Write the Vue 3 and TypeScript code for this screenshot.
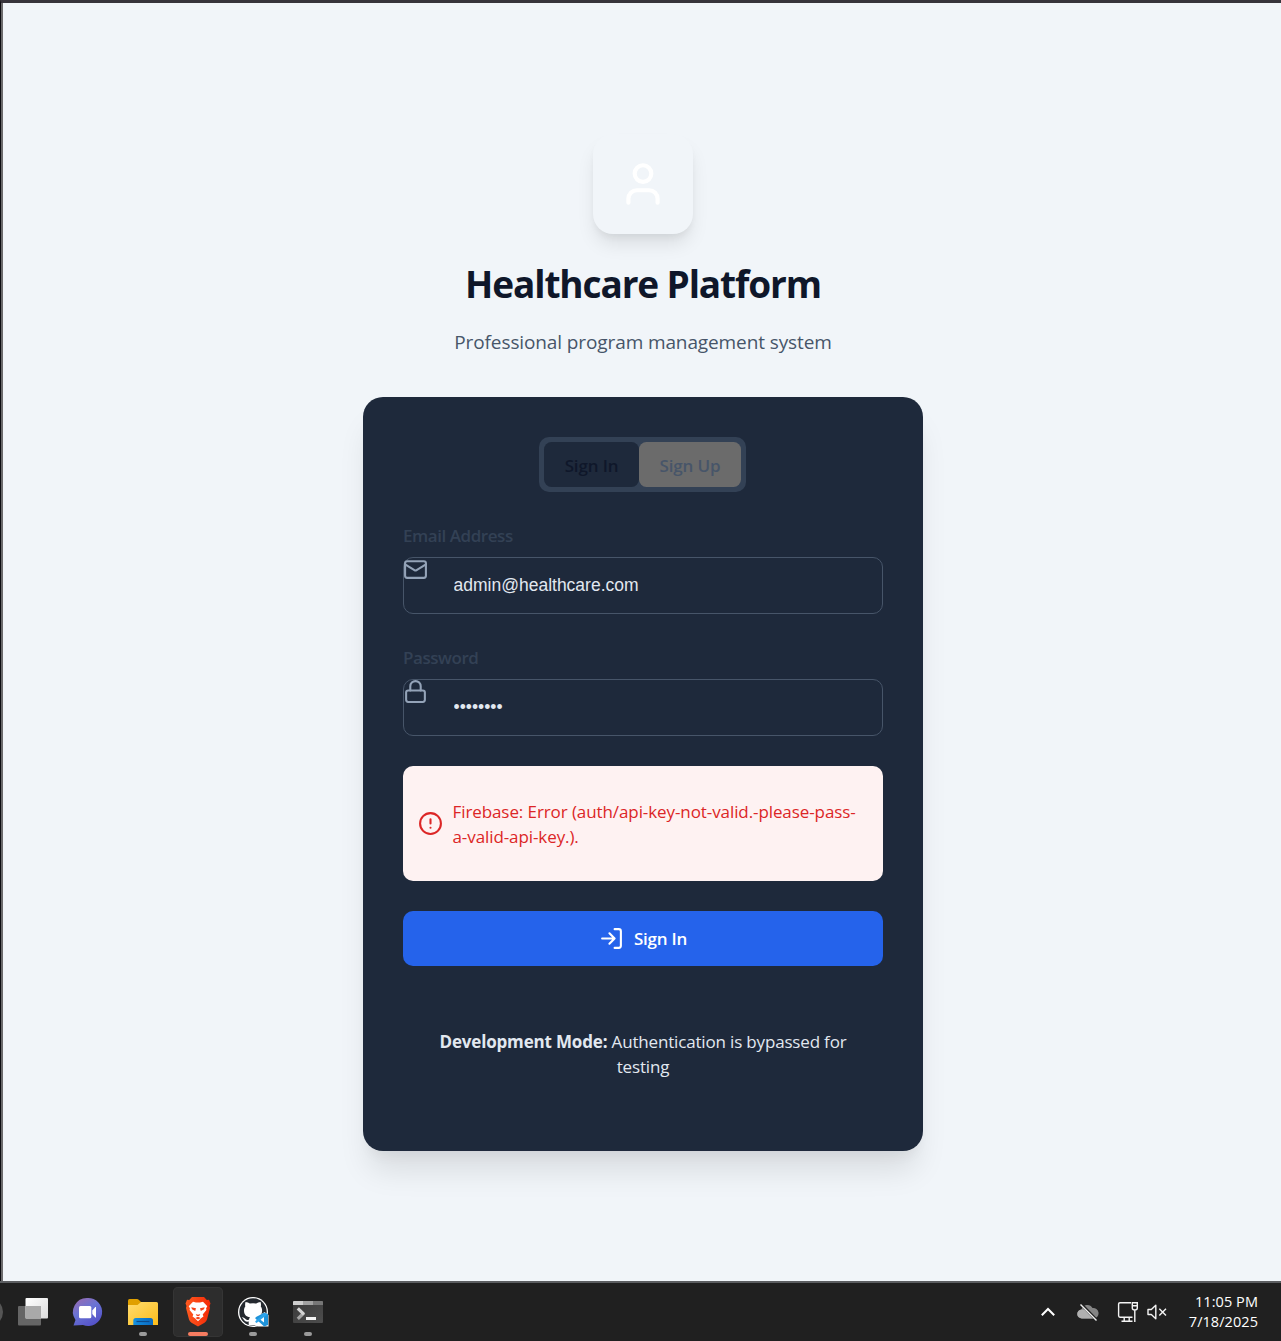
<script setup lang="ts">
import { ref } from 'vue'

const email = ref('admin@healthcare.com')
const password = ref('password')
const mode = ref<'in' | 'up'>('in')
</script>

<template>
  <div class="screen">
    <main class="page">
      <div class="logo">
        <svg width="50" height="50" viewBox="0 0 24 24" class="line-icon">
          <path d="M19 21v-2a4 4 0 0 0-4-4H9a4 4 0 0 0-4 4v2" />
          <circle cx="12" cy="7" r="4" />
        </svg>
      </div>
      <h1 class="title"><span>Healthcare Platform</span></h1>
      <p class="subtitle"><span>Professional program management system</span></p>

      <section class="card">
        <div class="tabs">
          <button type="button" class="tab tab-in" @click="mode = 'in'">Sign In</button>
          <button type="button" class="tab tab-up" @click="mode = 'up'">Sign Up</button>
        </div>

        <label class="label email-label" for="email">Email Address</label>
        <div class="field">
          <svg width="25" height="25" viewBox="0 0 24 24" class="line-icon field-icon">
            <rect x="2" y="4" width="20" height="16" rx="2" />
            <path d="m22 7-8.97 5.7a1.94 1.94 0 0 1-2.06 0L2 7" />
          </svg>
          <input id="email" v-model="email" type="text" spellcheck="false" />
        </div>

        <label class="label pass-label" for="password">Password</label>
        <div class="field">
          <svg width="25" height="25" viewBox="0 0 24 24" class="line-icon field-icon">
            <rect x="3" y="11" width="18" height="11" rx="2" />
            <path d="M7 11V7a5 5 0 0 1 10 0v4" />
          </svg>
          <input id="password" v-model="password" type="password" />
        </div>

        <div class="alert">
          <svg width="25" height="25" viewBox="0 0 24 24" class="line-icon">
            <circle cx="12" cy="12" r="10" />
            <path d="M12 8v4M12 16h.01" />
          </svg>
          <p>Firebase: Error (auth/api-key-not-valid.-please-pass-<br />a-valid-api-key.).</p>
        </div>

        <button type="button" class="submit">
          <svg width="25" height="25" viewBox="0 0 24 24" class="line-icon">
            <path d="M15 3h4a2 2 0 0 1 2 2v14a2 2 0 0 1-2 2h-4" />
            <path d="m10 17 5-5-5-5M15 12H3" />
          </svg>
          <span>Sign In</span>
        </button>

        <p class="note">
          <strong>Development Mode:</strong> <span>Authentication is bypassed for</span><br /><span>testing</span>
        </p>
      </section>
    </main>

    <footer class="taskbar">
      <svg class="edge" width="3" height="50" viewBox="0 0 3 50"><circle cx="-11" cy="25" r="14" fill="#555" /></svg>
      <div class="apps">
        <div class="app">
          <svg width="50" height="50" viewBox="0 0 50 50">
            <defs>
              <linearGradient id="tv" x1="0" y1="0" x2="1" y2="1"><stop offset="0" stop-color="#fff" /><stop offset="1" stop-color="#dcdcdc" /></linearGradient>
            </defs>
            <rect x="10" y="19" width="23" height="19.5" rx="1" fill="#656565" />
            <rect x="17.5" y="11" width="22.5" height="20.5" rx="1" fill="url(#tv)" />
            <rect x="17.5" y="19" width="15.5" height="12.5" fill="#a9a9a9" />
          </svg>
        </div>
        <div class="app">
          <svg width="50" height="50" viewBox="0 0 50 50">
            <defs>
              <linearGradient id="ch" x1="0.1" y1="0" x2="0.7" y2="1"><stop offset="0" stop-color="#9a6ab0" /><stop offset=".45" stop-color="#6a74d4" /><stop offset="1" stop-color="#5350c8" /></linearGradient>
            </defs>
            <path d="M24.500 11a14 14 0 1 1-4.500 27L10.500 38.500l2-5.500A14 14 0 0 1 24.500 11z" fill="url(#ch)" />
            <rect x="16" y="19" width="12.300" height="12.200" rx="1.500" fill="#fff" />
            <path d="M29.300 23.500l3-3.500h.700v10.500h-.700l-3-3.500z" fill="#fff" />
          </svg>
        </div>
        <div class="app">
          <svg width="50" height="50" viewBox="0 0 50 50">
            <defs>
              <linearGradient id="fo" x1="0" y1="0" x2="1" y2="1"><stop offset="0" stop-color="#ffdc70" /><stop offset="1" stop-color="#fcbc19" /></linearGradient>
              <linearGradient id="fb" x1="0" y1="0" x2="1" y2="0"><stop offset="0" stop-color="#1490df" /><stop offset="1" stop-color="#0a69c0" /></linearGradient>
            </defs>
            <path d="M10 13.500q0-1.500 1.500-1.500h7.500q1 0 2 1l2.500 2.500-3 4H10z" fill="#e0a000" />
            <path d="M10 18h9.500l3.500-3h15.500q1.500 0 1.500 1.500V38H10z" fill="url(#fo)" />
            <path d="M15.300 38v-4.500q0-2.500 2.500-2.500H32.500q2.500 0 2.500 2.500V38z" fill="url(#fb)" />
            <path d="M18.500 34.500h13" stroke="#0b4a8c" stroke-width="1.200" />
          </svg>
          <i class="dot" />
        </div>
        <div class="app active">
          <svg width="50" height="50" viewBox="0 0 50 50">
            <defs>
              <linearGradient id="br" x1="0" y1="0" x2="1" y2="0"><stop offset="0" stop-color="#ff5a1f" /><stop offset="1" stop-color="#f42a08" /></linearGradient>
            </defs>
            <path d="M19 10h12l2.800 3 2.200-.3 1.500 3.800-1 2.500.5 2-3 11.500q-.6 2-2.500 3.300L25 39.500l-6.500-3.700q-1.900-1.300-2.500-3.300L13 21l.5-2-1-2.500 1.500-3.800 2.200.3z" fill="url(#br)" />
            <path d="M20 14.800l3 .7h4l3-.7 4.300 4.500-1.200 2 .3 1.800-3.700 4.500.8 2-2.200 1.400-3.300 3.200-3.300-3.200-2.200-1.400.8-2-3.700-4.500.3-1.800-1.200-2z" fill="#fff" />
            <path d="M18.300 20.300l4.700 1-.8 2.600-3.200-1.600zM31.700 20.300l-4.700 1 .8 2.600 3.200-1.600zM22.800 27l2.200.8 2.200-.8-1 2h-2.400zM22.300 31l2.700-1.200 2.700 1.200-2.700 1.600z" fill="#f5421a" />
          </svg>
          <i class="dot wide" />
        </div>
        <div class="app">
          <svg width="50" height="50" viewBox="0 0 50 50">
            <circle cx="25" cy="25" r="15" fill="#fff" />
            <circle cx="25" cy="25" r="13.700" fill="#24292f" />
            <path d="M20.700 38.200v-3.600c-3.500.6-4.300-1.500-5.700-3.200-.4-.5-1-.8-1.200-1.200 2.700-.5 3.500 2.600 5.500 2.700q1 0 1.700-.5c.1-1 .5-1.700 1-2.200-4-.5-6-2.700-6-6.800 0-1.700.5-2.900 1.300-4-.3-1-.3-2.800.2-4.500 1.800 0 3.200.9 4.300 1.700a13 13 0 0 1 6.500 0c1.100-.8 2.500-1.700 4.300-1.700.5 1.700.5 3.500.2 4.500.8 1.100 1.300 2.300 1.300 4 0 4.100-2 6.300-6 6.800 1 .8 1.200 2 1.200 3.200v4.800z" fill="#fff" />
            <path d="M30 39.500h10.500V28l-4-3-7 5-3 1v7z" fill="#fff" />
            <path d="M36.200 25.800l3.800 1.500v10.800l-3.800 1.500-8.900-8.100v-.8l1.200-.9z" fill="#1e93da" />
            <path d="M27.300 34.200v.8l1.200.9L40 27.300l-3.800-1.500z" fill="#2ba3ea" />
            <path d="M36 30v5.400l-3.500-2.700z" fill="#fff" />
          </svg>
          <i class="dot" />
        </div>
        <div class="app">
          <svg width="50" height="50" viewBox="0 0 50 50">
            <defs>
              <linearGradient id="tm" x1="0" y1="0" x2="1" y2="1"><stop offset="0" stop-color="#3a3a3a" /><stop offset="1" stop-color="#4d4d4d" /></linearGradient>
            </defs>
            <rect x="10" y="14" width="30" height="22" rx="1" fill="url(#tm)" />
            <path d="M10 18v-3q0-1 1-1h9v4z" fill="#cfcfcf" />
            <rect x="20" y="14" width="10" height="4" fill="#a2a2a2" />
            <path d="M30 14h9q1 0 1 1v3H30z" fill="#777" />
            <path d="M20.800 26l-6 5.800" stroke="#a4a4a4" stroke-width="3.200" />
            <path d="M14.800 21.300l6.200 6" stroke="#d4d4d4" stroke-width="3.200" />
            <rect x="23" y="30" width="10" height="3" fill="#f4f4f4" />
          </svg>
          <i class="dot" />
        </div>
      </div>

      <div class="tray">
        <svg class="chev" width="14" height="20" viewBox="0 0 14 20" fill="none" stroke="#fff" stroke-width="2"><path d="M.8 13.300L7 7l6.200 6.300" /></svg>
        <svg class="cloud" width="22" height="20" viewBox="0 0 22 20">
          <path d="M5 16.500a4.500 4.500 0 0 1-.5-9A6 6 0 0 1 15.500 6a5.300 5.300 0 0 1 1.500 10.500z" fill="#858585" />
          <path d="M5 16.500a4.500 4.500 0 0 1-.5-9c3-.4 5 1 7 2.500l7 5.800q-1 .7-2 .7z" fill="#b0b0b0" />
          <path d="M4.500 2.500l15 15.500" stroke="#202020" stroke-width="3" />
          <path d="M3.500 2.500l16 16" stroke="#f0f0f0" stroke-width="1.400" />
        </svg>
        <svg class="net" width="22" height="22" viewBox="0 0 22 22" fill="none" stroke="#f4f4f4" stroke-width="1.400">
          <path d="M14 1.700H3Q1.600 1.700 1.600 3v11.500Q1.600 16.200 3 16.200h12.500M7.200 16.500v3.500M12.200 16.500v3.500M4.500 20.300h11" />
          <path d="M15.300 1.700h5V7q0 2-2.500 2t-2.500-2zM15.300 4.800h5M17.800 9v12" />
        </svg>
        <svg class="vol" width="20" height="20" viewBox="0 0 20 20" fill="none" stroke="#f4f4f4" stroke-width="1.400">
          <path d="M1 7.500h3.300L8.800 3.300v13.400L4.300 12.500H1z" stroke-linejoin="round" />
          <path d="M12.300 6.700l6.700 6.700M19 6.700l-6.700 6.700" />
        </svg>
        <div class="clock"><span class="time">11:05 PM</span><span class="date">7/18/2025</span></div>
      </div>
    </footer>
  </div>
</template>

<style>
body {
  margin: 0;
  background: #202020;
}
</style>

<style scoped>
.screen {
  width: 1281px;
  height: 1341px;
  display: flex;
  flex-direction: column;
  overflow: hidden;
  box-sizing: border-box;
  font-family: 'Open Sans', 'Noto Sans', sans-serif;
}
.page {
  flex: none;
  height: 1281px;
  box-sizing: border-box;
  border-top: 3px solid #37343b;
  border-left: 1px solid #0d0c11;
  box-shadow: inset 2px 0 #6b6a6c;
  background: #f1f5f9;
  padding: 131px 0 0 4px;
  display: flex;
  flex-direction: column;
  align-items: center;
}
.line-icon {
  display: block;
  flex: none;
  fill: none;
  stroke: currentColor;
  stroke-width: 2;
  stroke-linecap: round;
  stroke-linejoin: round;
}
.logo {
  flex: none;
  width: 100px;
  height: 100px;
  border-radius: 20px;
  display: flex;
  align-items: center;
  justify-content: center;
  color: #fff;
  background: #f1f5f9;
  box-shadow: 0 12.5px 18.75px -3.75px rgba(0, 0, 0, 0.1), 0 5px 7.5px -2.5px rgba(0, 0, 0, 0.05);
}
.title {
  margin: 26px 0 0;
  height: 48px;
  line-height: 48px;
  font-size: 37px;
  font-weight: 700;
  letter-spacing: -1.12px;
  color: #0f172a;
  white-space: nowrap;
}
.subtitle {
  margin: 19px 0 0;
  height: 30px;
  line-height: 30px;
  font-size: 19px;
  letter-spacing: -0.11px;
  color: #475569;
  white-space: nowrap;
}
.card {
  flex: none;
  width: 560px;
  height: 754px;
  margin-top: 40px;
  box-sizing: border-box;
  padding: 40px;
  border-radius: 20px;
  background: #1e293b;
  box-shadow: 0 25px 31px -6px rgba(0, 0, 0, 0.1), 0 10px 12.5px -6px rgba(0, 0, 0, 0.05);
  display: flex;
  flex-direction: column;
}
button {
  border: 0;
  margin: 0;
  padding: 0;
  font-family: inherit;
}
.tabs {
  align-self: center;
  width: 207px;
  height: 55px;
  box-sizing: border-box;
  margin-right: 1px;
  padding: 5px;
  border-radius: 10px;
  background: #334155;
  display: flex;
}
.tab {
  height: 45px;
  padding-top: 2px;
  border-radius: 7.5px;
  font-size: 17px;
  font-weight: 600;
  letter-spacing: -0.15px;
}
.tab-in {
  width: 95px;
  background: #1e293b;
  color: #0f172a;
}
.tab-up {
  width: 102px;
  background: #6b6b6b;
  color: #475569;
}
.label {
  height: 26px;
  line-height: 26px;
  font-size: 17px;
  font-weight: 600;
  letter-spacing: -0.45px;
  color: #334155;
}
.email-label {
  margin-top: 31px;
}
.pass-label {
  margin-top: 31px;
}
.field {
  position: relative;
  height: 57px;
  margin-top: 8px;
}
.field-icon {
  position: absolute;
  left: 0;
  top: 0;
  color: #94a3b8;
}
.field input {
  display: block;
  width: 480px;
  height: 57px;
  box-sizing: border-box;
  padding: 0 20px 0 49.5px;
  border: 1px solid #475569;
  border-radius: 10px;
  outline: 0;
  background: transparent;
  color: #e2e8f0;
  font: 17.5px 'Liberation Sans', Arial, sans-serif;
}
.alert {
  height: 115px;
  margin-top: 30px;
  box-sizing: border-box;
  padding: 0 15px;
  border-radius: 10px;
  background: #fef2f2;
  color: #dc2626;
  display: flex;
  align-items: center;
  gap: 9.5px;
}
.alert p {
  margin: 0;
  font-size: 17px;
  line-height: 25px;
  letter-spacing: -0.09px;
  white-space: nowrap;
}
.submit {
  height: 55px;
  margin-top: 30px;
  border-radius: 10px;
  background: #2563eb;
  color: #fff;
  display: flex;
  align-items: center;
  justify-content: center;
  gap: 10px;
  font-size: 17px;
  font-weight: 600;
  letter-spacing: -0.25px;
}
.note {
  margin: 63px 0 0;
  text-align: center;
  font-size: 17px;
  line-height: 25px;
  letter-spacing: -0.17px;
  color: #e2e8f0;
  white-space: nowrap;
}
.taskbar {
  flex: none;
  height: 60px;
  box-sizing: border-box;
  border-top: 2px solid #5c5e61;
  background: #202020;
  padding: 4px 23px 4px 0;
  display: flex;
  align-items: flex-start;
}
.apps {
  display: flex;
  gap: 5px;
  margin-left: 5px;
}
.app {
  position: relative;
  width: 50px;
  height: 50px;
  border-radius: 5px;
}
.app svg {
  display: block;
}
.app.active {
  background: #2d2d2d;
  box-shadow: inset 0 0 0 1px #353535;
}
.dot {
  position: absolute;
  left: 21px;
  bottom: 1px;
  width: 8px;
  height: 4px;
  border-radius: 2px;
  background: #9a9a9a;
}
.dot.wide {
  left: 15px;
  width: 20px;
  background: #f67c60;
}
.tray {
  margin-left: auto;
  height: 50px;
  display: flex;
  align-items: center;
}
.cloud {
  margin-left: 22px;
}
.net {
  margin-left: 18px;
}
.vol {
  margin-left: 8px;
}
.clock {
  width: 91px;
  display: flex;
  flex-direction: column;
  align-items: flex-end;
  color: #fff;
  font-size: 14.5px;
  line-height: 20px;
  letter-spacing: 0.06px;
  white-space: nowrap;
}
</style>
